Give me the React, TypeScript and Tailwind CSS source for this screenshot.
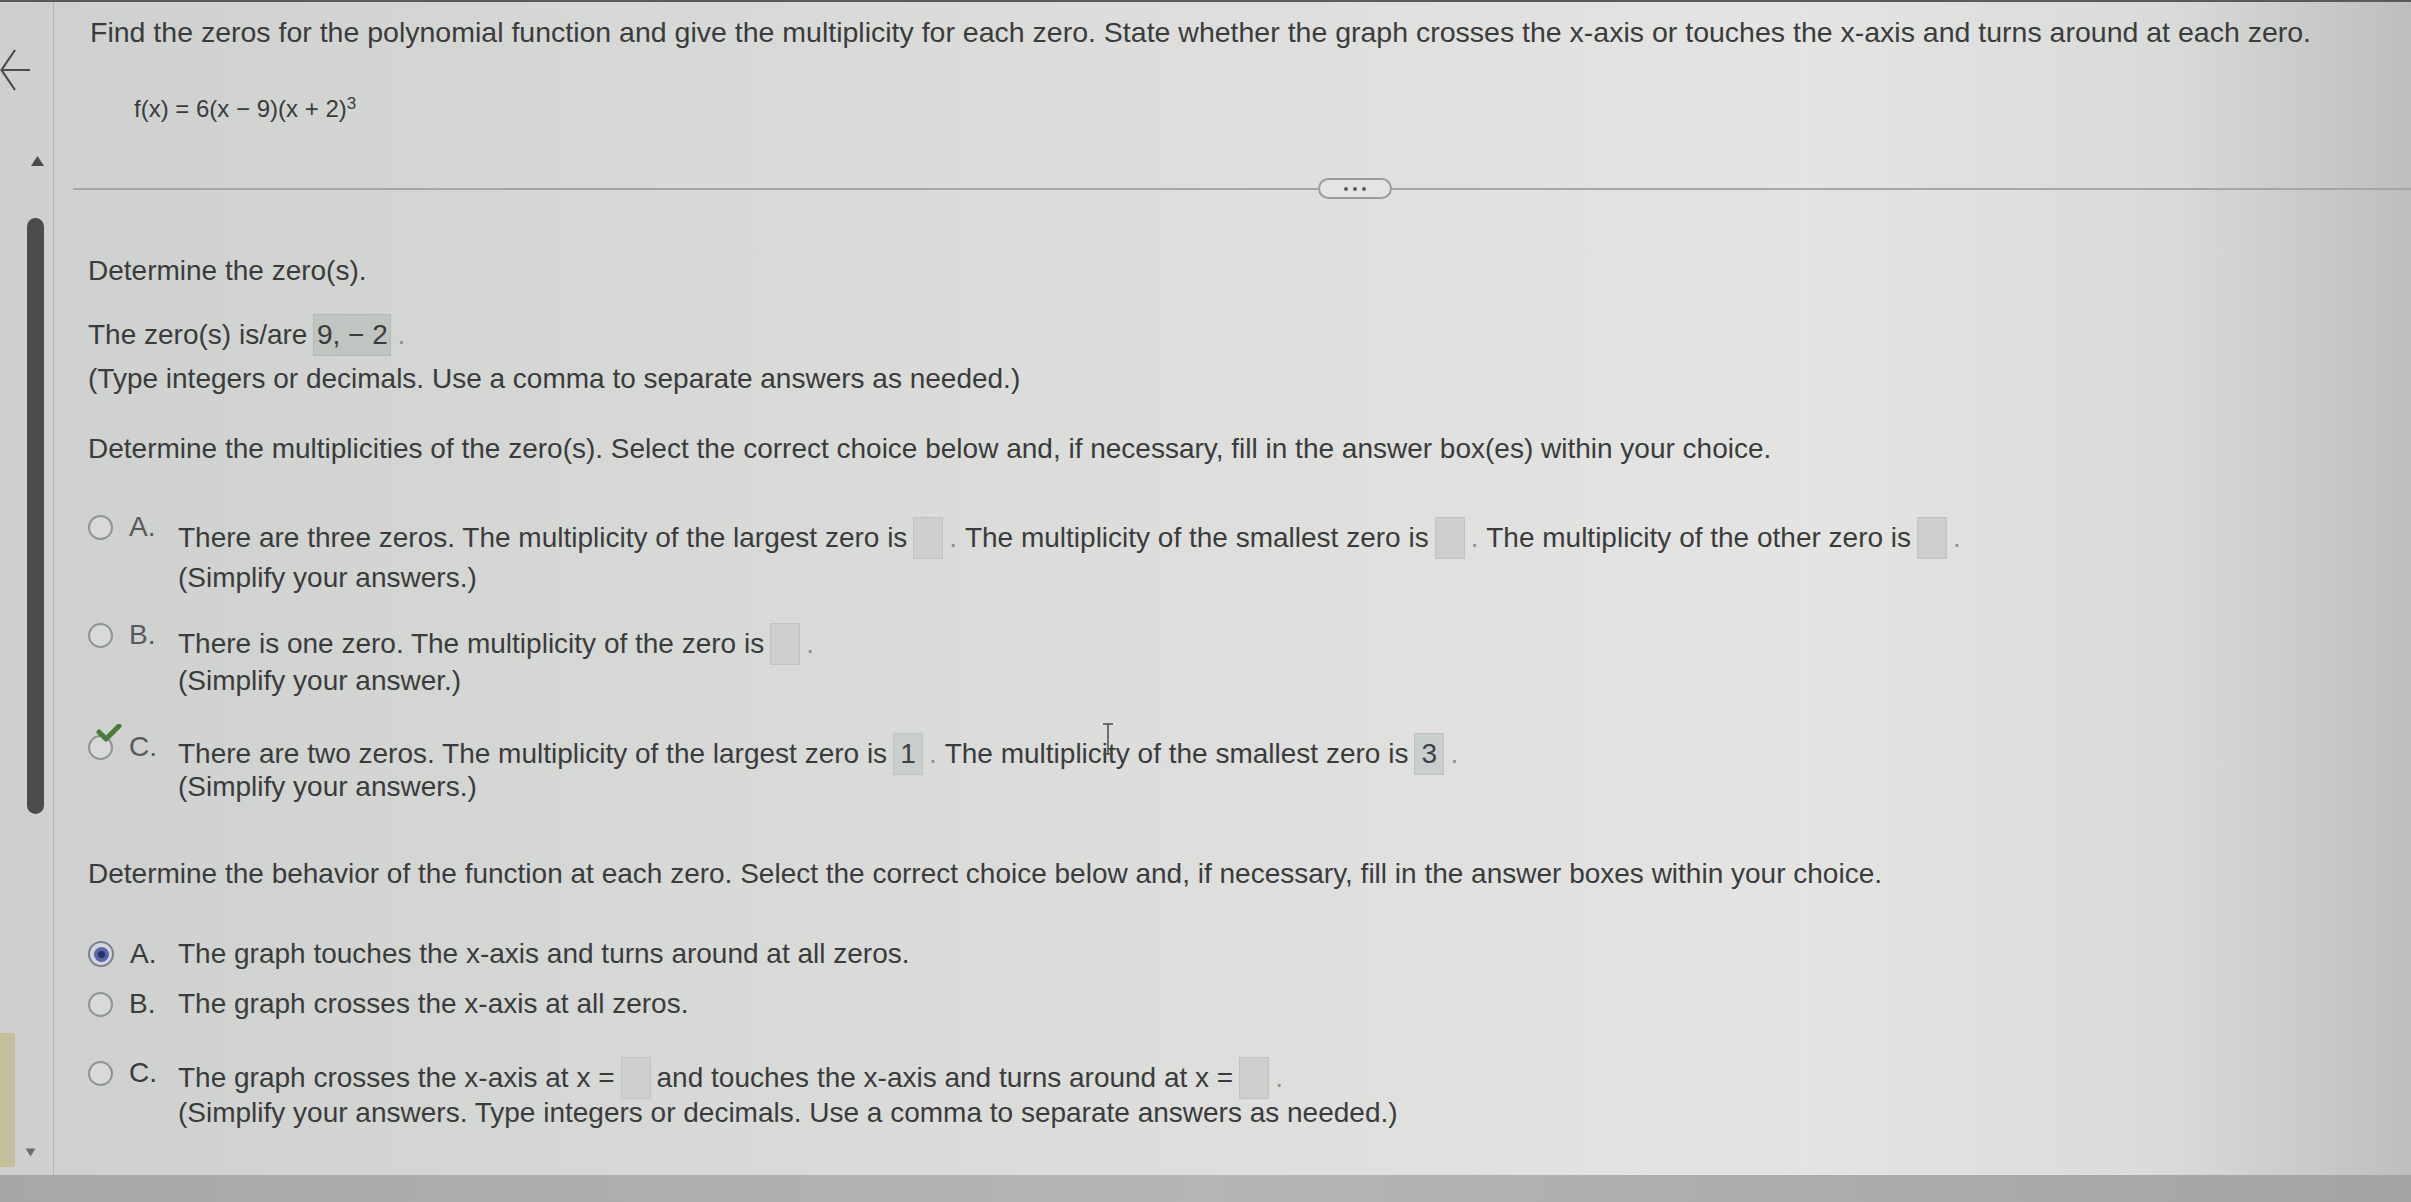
import React from 'react';

type Tone = 'empty' | 'filled' | 'blue';

const AnswerBox = ({ tone = 'empty', children, w = 'w-[30px]' }: { tone?: Tone; children?: React.ReactNode; w?: string }) => {
  const toneClass =
    tone === 'filled'
      ? 'bg-[#c0c5c2] border-[#b5bab7] text-[#3a3c3c]'
      : tone === 'blue'
      ? 'bg-[#c8cfce] border-[#bcc3c2] text-[#3d4242]'
      : 'bg-[#cdcfcc] border-[#bfc2bf]';
  return (
    <span className={`inline-flex h-[42px] ${w} items-center justify-center border px-[4px] mx-[6px] ${toneClass}`}>
      {children}
    </span>
  );
};

const Dot = () => <span className="text-[#8e918f]">.</span>;

const Radio = ({ state }: { state?: 'on' | 'check' }) => {
  if (state === 'on') {
    return (
      <span className="flex h-[26px] w-[26px] items-center justify-center rounded-full border-2 border-[#7c8190] bg-[#d3d6dc]">
        <span className="flex h-[15px] w-[15px] items-center justify-center rounded-full bg-[#5a67a6]">
          <span className="h-[7px] w-[7px] rounded-full bg-[#26306a]" />
        </span>
      </span>
    );
  }
  return (
    <span className="relative flex h-[25px] w-[25px] items-center justify-center rounded-full border-2 border-[#8f9391] bg-[#d8dad8]">
      {state === 'check' && (
        <svg className="absolute -top-[13px] left-[6px]" width="26" height="20" viewBox="0 0 26 20">
          <path d="M3 8 L10 15 L23 2" fill="none" stroke="#4d7a3c" strokeWidth="5" strokeLinecap="round" strokeLinejoin="round" />
        </svg>
      )}
    </span>
  );
};

const Choice = ({
  letter,
  state,
  lift = 'mb-0',
  letterTone = 'text-[#575a5a]',
  children,
  extra,
}: {
  letter: string;
  state?: 'on' | 'check';
  lift?: string;
  letterTone?: string;
  children: React.ReactNode;
  extra?: React.ReactNode;
}) => (
  <div className="relative flex h-[42px] items-center whitespace-nowrap">
    <div className={`flex w-[90px] items-center ${lift}`}>
      <Radio state={state} />
      <span className={`ml-[16px] ${letterTone}`}>{letter}</span>
    </div>
    <div className="flex items-center">{children}</div>
    {extra}
  </div>
);

export default function App() {
  return (
    <div className="flex h-[1202px] w-full flex-col overflow-hidden border-t-2 border-[#595b5a] bg-[linear-gradient(90deg,#cdd0ce_0%,#d6d8d5_25%,#dfe0dd_55%,#e4e5e2_75%,#d9dbd8_90%,#bcbfbd_100%)] font-['Liberation_Sans',Arial,sans-serif] text-[28px] text-[#3a3c3c]">
      <div className="flex h-[1173px]">
        {/* left rail */}
        <aside className="flex w-[54px] shrink-0 flex-col border-r border-[#b3b6b4]">
          <svg className="mt-[46px]" width="31" height="44" viewBox="0 0 31 44">
            <path d="M15 2 L1.5 22 L15 42 M1.5 22 H30" fill="none" stroke="#4b4d4d" strokeWidth="2.2" />
          </svg>
          <svg className="ml-[30px] mt-[63px]" width="15" height="12" viewBox="0 0 15 12">
            <polygon points="7.5,1 14,11 1,11" fill="#4a4c4c" />
          </svg>
          <div className="ml-[27px] mt-[51px] h-[596px] w-[17px] rounded-full bg-[#4b4d4d]" />
          <div className="mt-[219px] flex h-[134px]">
            <div className="h-full w-[15px] bg-[#c5bf9b]" />
            <svg className="mb-[10px] ml-[10px] self-end" width="11" height="9" viewBox="0 0 11 9">
              <polygon points="0.5,0.5 10.5,0.5 5.5,8.5" fill="#6b6d6c" />
            </svg>
          </div>
        </aside>

        {/* question */}
        <main className="flex flex-1 flex-col">
          <p className="ml-[36px] mt-[12px] h-[36px] whitespace-nowrap text-[28.5px] leading-[36px]">
            Find the zeros for the polynomial function and give the multiplicity for each zero. State whether the graph crosses the x-axis or touches the x-axis and turns around at each zero.
          </p>
          <p className="ml-[80px] mt-[43px] h-[32px] whitespace-nowrap text-[24px] leading-[32px]">
            f(x) = 6(x − 9)(x + 2)<sup className="text-[17px]">3</sup>
          </p>

          <div className="ml-[19px] mt-[53px] flex h-[21px] items-center">
            <div className="h-[2px] w-[1245px] bg-[#a4a7a5]" />
            <div className="flex h-[21px] w-[74px] items-center justify-center gap-[5px] rounded-full border-2 border-[#9a9d9b] bg-[#e4e5e3]">
              <span className="h-[4px] w-[4px] rounded-full bg-[#5a5c5c]" />
              <span className="h-[4px] w-[4px] rounded-full bg-[#5a5c5c]" />
              <span className="h-[4px] w-[4px] rounded-full bg-[#5a5c5c]" />
            </div>
            <div className="h-[2px] flex-1 bg-[#a4a7a5]" />
          </div>

          <div className="ml-[34px] flex flex-col">
            <p className="mt-[54px] h-[36px] leading-[36px]">Determine the zero(s).</p>
            <div className="mt-[25px] flex h-[42px] items-center whitespace-nowrap">
              The zero(s) is/are
              <AnswerBox tone="filled" w="w-[78px]">9, − 2</AnswerBox>
              <Dot />
            </div>
            <p className="mt-[5px] h-[36px] leading-[36px]">(Type integers or decimals. Use a comma to separate answers as needed.)</p>
            <p className="mt-[34px] h-[36px] whitespace-nowrap leading-[36px]">
              Determine the multiplicities of the zero(s). Select the correct choice below and, if necessary, fill in the answer box(es) within your choice.
            </p>

            <div className="mt-[50px]">
              <Choice letter="A." lift="mb-[22px]">
                There are three zeros. The multiplicity of the largest zero is
                <AnswerBox />
                <Dot />
                &nbsp;The multiplicity of the smallest zero is
                <AnswerBox />
                <Dot />
                &nbsp;The multiplicity of the other zero is
                <AnswerBox />
                <Dot />
              </Choice>
            </div>
            <p className="ml-[90px] mt-[1px] h-[36px] leading-[36px]">(Simplify your answers.)</p>

            <div className="mt-[27px]">
              <Choice letter="B." lift="mb-[18px]">
                There is one zero. The multiplicity of the zero is
                <AnswerBox />
                <Dot />
              </Choice>
            </div>
            <p className="ml-[90px] mt-[-2px] h-[36px] leading-[36px]">(Simplify your answer.)</p>

            <div className="mt-[34px]">
              <Choice
                letter="C."
                state="check"
                lift="mb-[14px]"
                extra={
                  <svg className="absolute left-[1014px] top-[-10px]" width="12" height="32" viewBox="0 0 12 32">
                    <path d="M1 1 H11 M6 1 V31 M1 31 H11" fill="none" stroke="#4a4c4c" strokeWidth="1.5" />
                  </svg>
                }
              >
                There are two zeros. The multiplicity of the largest zero is
                <AnswerBox tone="blue">1</AnswerBox>
                <Dot />
                &nbsp;The multiplicity of the smallest zero is
                <AnswerBox tone="blue">3</AnswerBox>
                <Dot />
              </Choice>
            </div>
            <p className="ml-[90px] mt-[-6px] h-[36px] leading-[36px]">(Simplify your answers.)</p>

            <p className="mt-[51px] h-[36px] whitespace-nowrap leading-[36px]">
              Determine the behavior of the function at each zero. Select the correct choice below and, if necessary, fill in the answer boxes within your choice.
            </p>

            <div className="mt-[41px]">
              <Choice letter="A." state="on" letterTone="text-[#3a3c3c]">
                The graph touches the x-axis and turns around at all zeros.
              </Choice>
            </div>
            <div className="mt-[8px]">
              <Choice letter="B." letterTone="text-[#3a3c3c]">
                The graph crosses the x-axis at all zeros.
              </Choice>
            </div>
            <div className="mt-[32px]">
              <Choice letter="C." letterTone="text-[#3a3c3c]" lift="mb-[10px]">
                The graph crosses the x-axis at x =
                <AnswerBox />
                and touches the x-axis and turns around at x =
                <AnswerBox />
                <Dot />
              </Choice>
            </div>
            <p className="ml-[90px] mt-[-4px] h-[36px] whitespace-nowrap leading-[36px]">
              (Simplify your answers. Type integers or decimals. Use a comma to separate answers as needed.)
            </p>
          </div>
        </main>
      </div>
      <footer className="h-[27px] w-full bg-[linear-gradient(90deg,#a6a8a6,#b4b6b3_50%,#a3a5a3)]" />
    </div>
  );
}
